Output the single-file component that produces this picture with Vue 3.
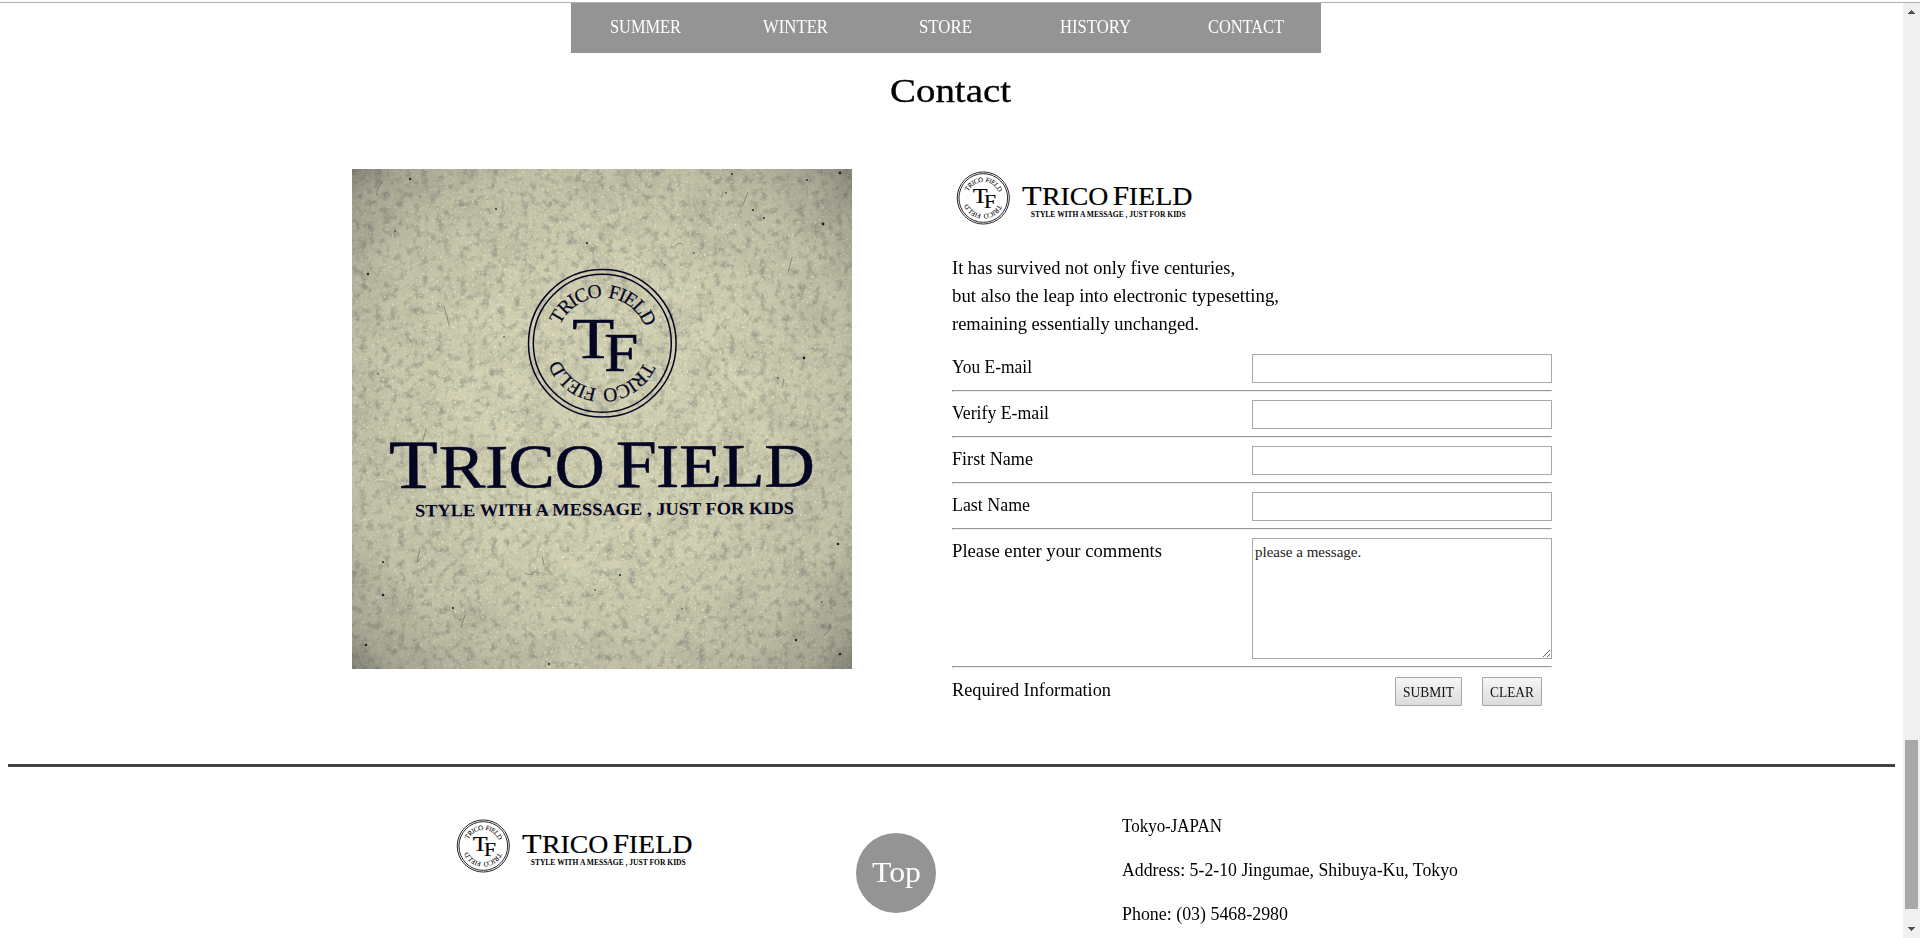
<script setup>
// Stretches a line's glyphs so that it takes the given width.
const vFit = {
  mounted(el, { value }) {
    const natural = el.getBoundingClientRect().width
    el.style.width = `${value}px`
    el.style.transform = `scaleX(${value / natural})`
  },
}

const nav = [
  { label: 'SUMMER', width: 71 },
  { label: 'WINTER', width: 65 },
  { label: 'STORE', width: 53 },
  { label: 'HISTORY', width: 71 },
  { label: 'CONTACT', width: 76 },
]
const intro = [
  { text: 'It has survived not only five centuries,', width: 283 },
  { text: 'but also the leap into electronic typesetting,', width: 327 },
  { text: 'remaining essentially unchanged.', width: 247 },
]
const fields = [
  { label: 'You E-mail', width: 80 },
  { label: 'Verify E-mail', width: 97 },
  { label: 'First Name', width: 81 },
  { label: 'Last Name', width: 78 },
]
const address = [
  { text: 'Tokyo-JAPAN', width: 100 },
  { text: 'Address: 5-2-10 Jingumae, Shibuya-Ku, Tokyo', width: 336 },
  { text: 'Phone: (03) 5468-2980', width: 166 },
]

// Dark flecks and fibres in the paper.
const flecks = [
  [58, 10, 1.1], [488, 4, 1.4], [471, 55, 1.4], [401, 41, 1], [144, 40, .9], [235, 74, 1],
  [16, 105, 1.2], [452, 189, 1.4], [426, 209, .8], [486, 375, 1.3], [31, 393, 1], [31, 426, 1.3],
  [268, 406, 1], [101, 439, 1.1], [14, 476, 1.3], [444, 471, 1.2], [488, 485, 1.2], [243, 421, .8],
  [197, 495, .9], [455, 11, .9], [374, 24, .8], [342, 84, .8], [43, 62, .8], [152, 168, .8],
  [412, 49, .9], [470, 433, .8], [380, 5, .9], [50, 275, .8], [26, 205, .7], [330, 440, .7],
]
const fibres = [
  'M31 13q-7 5-6 14', 'M396 23l-5 13', 'M323 77q5-5 8-1', 'M173 404q6 4 10-2', 'M113 446l-4 12',
  'M478 454q1 8-6 12', 'M68 379l-3 15', 'M440 88l-4 16', 'M92 137q3 9 5 20', 'M432 210l-2 9',
  'M74 260l-3 11', 'M190 387l2 9', 'M309 90q0 5 5 6',
]
</script>

<template>
  <div class="screen">
    <svg class="defs" width="0" height="0" aria-hidden="true">
      <defs>
        <path id="arc" d="M-45.8 0A45.8 45.8 0 0 1 45.8 0" />
        <g id="seal" fill="currentColor" stroke="currentColor">
          <circle r="73.8" fill="none" />
          <circle r="69" fill="none" />
          <g v-for="turn in [0, 180]" :key="turn" :transform="`rotate(${turn})`" stroke-width=".2">
            <text font-size="19.5" word-spacing="3" transform="rotate(1.5)">
              <textPath href="#arc" startOffset="50%" text-anchor="middle" textLength="109">TRICO FIELD</textPath>
            </text>
          </g>
          <g stroke-width=".6">
            <text x="-30" y="14.5" font-size="57" textLength="42" lengthAdjust="spacingAndGlyphs">T</text>
            <text x="2" y="27.5" font-size="54" textLength="34" lengthAdjust="spacingAndGlyphs">F</text>
          </g>
        </g>
        <g id="wordmark" fill="currentColor" stroke="currentColor" stroke-width=".5">
          <text x="-1" font-size="69" textLength="49" lengthAdjust="spacingAndGlyphs">T</text>
          <text x="49" font-size="62" textLength="166" lengthAdjust="spacingAndGlyphs">RICO</text>
          <text x="226" font-size="68" textLength="41" lengthAdjust="spacingAndGlyphs">F</text>
          <text x="266" font-size="62" textLength="159" lengthAdjust="spacingAndGlyphs">IELD</text>
        </g>
        <g id="brand">
          <use href="#seal" stroke-width="2.4" transform="translate(31.3 29) scale(.353)" />
          <use href="#wordmark" transform="translate(70.4 36) scale(.4)" />
          <text x="78.7" y="48" font-size="8.8" font-weight="700" textLength="155" lengthAdjust="spacingAndGlyphs">STYLE WITH A MESSAGE , JUST FOR KIDS</text>
        </g>
      </defs>
    </svg>

    <div class="edge"></div>
    <div class="view">
      <div class="page">
        <nav class="nav">
          <a v-for="n in nav" :key="n.label"><span v-fit="n.width" class="fit">{{ n.label }}</span></a>
        </nav>
        <h1><span v-fit="121" class="fit">Contact</span></h1>

        <main class="main">
          <svg class="poster" width="500" height="500" viewBox="0 0 500 500">
            <defs>
              <radialGradient id="shade" cx=".5" cy=".5" r=".72">
                <stop offset=".4" stop-color="#45454a" stop-opacity="0" />
                <stop offset=".72" stop-color="#45454a" stop-opacity=".12" />
                <stop offset=".9" stop-color="#3c3c42" stop-opacity=".3" />
                <stop offset="1" stop-color="#303038" stop-opacity=".52" />
              </radialGradient>
              <filter id="grain" x="0" y="0" width="1" height="1" color-interpolation-filters="sRGB">
                <feTurbulence type="fractalNoise" baseFrequency=".13" numOctaves="5" seed="4" />
                <feColorMatrix values="0 0 0 0 .42  0 0 0 0 .42  0 0 0 0 .43  1.2 0 0 0 -.58" />
              </filter>
              <filter id="light" x="0" y="0" width="1" height="1" color-interpolation-filters="sRGB">
                <feTurbulence type="fractalNoise" baseFrequency=".4" numOctaves="2" seed="11" />
                <feColorMatrix values="0 0 0 0 .95  0 0 0 0 .94  0 0 0 0 .8  0 3 0 0 -1.75" />
              </filter>
              <filter id="mottle" x="0" y="0" width="1" height="1" color-interpolation-filters="sRGB">
                <feTurbulence type="fractalNoise" baseFrequency=".03" numOctaves="5" seed="7" />
                <feColorMatrix values="0 0 0 0 .45  0 0 0 0 .45  0 0 0 0 .42  .4 0 0 0 -.17" />
              </filter>
            </defs>
            <rect width="500" height="500" fill="#d0cfb1" />
            <rect width="500" height="500" filter="url(#mottle)" />
            <rect width="500" height="500" filter="url(#grain)" />
            <rect width="500" height="500" filter="url(#light)" />
            <rect width="500" height="500" fill="url(#shade)" />
            <circle v-for="([x, y, r], i) in flecks" :key="i" :cx="x" :cy="y" :r="r" fill="#1c1c2c" />
            <path v-for="d in fibres" :key="d" :d="d" fill="none" stroke="#44444e" stroke-width=".7" opacity=".65" />
            <g class="ink">
              <use href="#seal" stroke-width="1.5" transform="translate(250.3 174.3)" />
              <use href="#wordmark" transform="translate(38 319) rotate(-.2)" />
              <text x="63" y="347.5" font-size="17.5" font-weight="700" fill="currentColor" textLength="379" lengthAdjust="spacingAndGlyphs" transform="rotate(-.4 63 347)">STYLE WITH A MESSAGE , JUST FOR KIDS</text>
            </g>
          </svg>

          <section class="contact">
            <svg class="brand" width="250" height="60"><use href="#brand" /></svg>
            <div class="intro">
              <div v-for="l in intro" :key="l.text"><span v-fit="l.width" class="fit">{{ l.text }}</span></div>
            </div>
            <form @submit.prevent>
              <template v-for="f in fields" :key="f.label">
                <label class="row">
                  <span v-fit="f.width" class="fit">{{ f.label }}</span>
                  <input type="text" />
                </label>
                <hr />
              </template>
              <label class="row">
                <span v-fit="210" class="fit">Please enter your comments</span>
                <textarea>please a message.</textarea>
              </label>
              <hr />
              <div class="row last">
                <span v-fit="159" class="fit">Required Information</span>
                <div class="buttons">
                  <button class="submit"><span v-fit="51" class="fit">SUBMIT</span></button>
                  <button class="clear" type="reset"><span v-fit="44" class="fit">CLEAR</span></button>
                </div>
              </div>
            </form>
          </section>
        </main>

        <footer class="footer">
          <svg class="brand" width="250" height="60"><use href="#brand" /></svg>
          <a class="top"><span v-fit="49" class="fit">Top</span></a>
          <address>
            <div v-for="a in address" :key="a.text"><span v-fit="a.width" class="fit">{{ a.text }}</span></div>
          </address>
        </footer>
      </div>

      <aside class="scrollbar">
        <svg width="17" height="17"><path d="M5 11v-1h1v-1h1v-1h1v-1h1v1h1v1h1v1h1v1z" fill="#505050" /></svg>
        <div class="thumb"></div>
        <svg width="17" height="17"><path d="M5 6h7v1h-1v1h-1v1h-1v1h-1v-1h-1v-1h-1v-1h-1z" fill="#505050" /></svg>
      </aside>
    </div>
  </div>
</template>

<style>
html,
body {
  margin: 0;
  overflow: hidden;
  background: #fff;
}
</style>

<style scoped>
.screen {
  display: flex;
  flex-direction: column;
  width: 1920px;
  height: 938px;
  overflow: hidden;
  background: #fff;
  color: #000;
  font: 18px/28px "Liberation Serif", "Times New Roman", serif;
}
.defs {
  position: absolute;
}
.edge {
  box-sizing: border-box;
  flex: none;
  height: 3px;
  border-bottom: 1px solid #b0b0b0;
}
.view {
  display: flex;
  flex: 1;
  min-height: 0;
}
.page {
  width: 1903px;
}
.fit {
  display: inline-block;
  text-align: left;
  white-space: nowrap;
  transform-origin: 0 0;
}
.nav {
  display: grid;
  grid-template-columns: repeat(5, 150px);
  width: 750px;
  height: 50px;
  margin-left: 571px;
  background: #949494;
  color: #fff;
  line-height: 49px;
  text-align: center;
}
.nav .fit {
  margin-left: -1px;
}
h1 {
  margin: 18px 0 0;
  font-size: 33px;
  font-weight: 400;
  line-height: 41px;
  height: 40px;
  text-align: center;
  -webkit-text-stroke: .3px #000;
}
h1 .fit {
  margin-left: -2px;
}
.main {
  display: flex;
  gap: 100px;
  margin: 58px 0 0 352px;
}
.poster {
  display: block;
  flex: none;
}
.ink {
  color: #050524;
}
.contact {
  width: 600px;
  height: 537px;
}
.brand {
  display: block;
  flex: none;
}
.intro {
  margin: 25px 0 16px;
}
.intro .fit,
.row > .fit {
  margin-left: -.5px;
}
.row {
  display: flex;
  justify-content: space-between;
  align-items: flex-start;
  line-height: 27px;
}
.last {
  line-height: 29px;
}
input,
textarea {
  box-sizing: border-box;
  display: block;
  flex: none;
  width: 300px;
  height: 29px;
  margin: 0;
  padding: 3px 2px;
  border: 1px solid #a9a9a9;
  border-radius: 0;
  background: #fff;
  color: #222;
  font: 15px/20px "Liberation Serif", "Times New Roman", serif;
}
textarea {
  height: 121px;
}
hr {
  margin: 7px 0 8px;
  border: 1px solid #989898;
  border-right-color: #eee;
  border-bottom-color: #eee;
}
.buttons {
  display: flex;
  flex: none;
  gap: 20px;
  margin: 1px 10px 0 0;
}
button {
  box-sizing: border-box;
  height: 29px;
  padding: 0;
  border: 1px solid #a6a6a6;
  border-radius: 1px;
  background: linear-gradient(#f6f6f6, #dcdcdc);
  color: #111;
  font: 15.5px/25px "Liberation Serif", "Times New Roman", serif;
}
.submit {
  width: 67px;
}
.clear {
  width: 60px;
}
.footer {
  display: flex;
  align-items: flex-start;
  margin: 58px 8px 0;
  padding-left: 444px;
  border-top: 3px solid #424244;
}
.footer .brand {
  margin-top: 50px;
}
.top {
  width: 80px;
  height: 80px;
  margin: 66px 186px 0 154px;
  border-radius: 50%;
  background: #949494;
  color: #fff;
  font-size: 30px;
  line-height: 77px;
  text-align: center;
}
address {
  margin-top: 37px;
  font-style: normal;
  line-height: 44px;
}
.scrollbar {
  display: flex;
  flex-direction: column;
  align-items: center;
  width: 17px;
  background: #f0f0f0;
}
.thumb {
  width: 13px;
  height: 169px;
  margin: auto 0 12px;
  background: #a8a8a8;
}
</style>
